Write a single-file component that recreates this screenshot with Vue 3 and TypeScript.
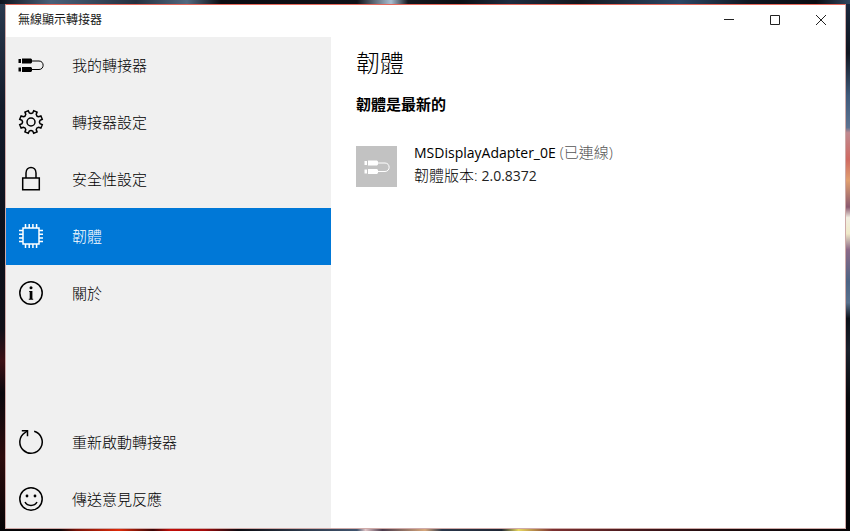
<script setup lang="ts">
import { ref } from 'vue'

type IconName = 'adapter' | 'gear' | 'lock' | 'chip' | 'info' | 'restart' | 'smile'

interface NavItem {
  id: string
  label: string
  icon: IconName
}

const mainItems: NavItem[] = [
  { id: 'adapters', label: '我的轉接器', icon: 'adapter' },
  { id: 'settings', label: '轉接器設定', icon: 'gear' },
  { id: 'security', label: '安全性設定', icon: 'lock' },
  { id: 'firmware', label: '韌體', icon: 'chip' },
  { id: 'about', label: '關於', icon: 'info' },
]

const footerItems: NavItem[] = [
  { id: 'restart', label: '重新啟動轉接器', icon: 'restart' },
  { id: 'feedback', label: '傳送意見反應', icon: 'smile' },
]

const groups = [mainItems, footerItems]
const current = ref('firmware')

const plugs =
  'M.5 7H3V11H.5ZM4 6.500H13L14 7.500V10.500L13 11.500H4ZM.5 15.500H3V19.500H.5ZM4 15H13L14 16V19L13 20H4Z'
const cable = 'M14 9H21C26.500 9 26.500 17.500 21 17.500H14'

// Outline of an eight-toothed gear centred on (13, 13).
function gearPath(): string {
  const point = (radius: number, degrees: number): string => {
    const a = (degrees * Math.PI) / 180
    return `${(13 + radius * Math.cos(a)).toFixed(2)} ${(13 + radius * Math.sin(a)).toFixed(2)}`
  }
  const parts: string[] = []
  for (let i = 0; i < 8; i++) {
    const c = i * 45 + 22.5
    parts.push(`${i === 0 ? 'M' : 'L'}${point(9.2, c - 12)}`)
    parts.push(`L${point(11.6, c - 9)}`)
    parts.push(`L${point(11.6, c + 9)}`)
    parts.push(`L${point(9.2, c + 12)}`)
    parts.push(`A2.800 2.800 0 0 0 ${point(9.2, c + 33)}`)
  }
  return parts.join(' ') + 'Z'
}

const gear = gearPath()
</script>

<template>
  <div class="desktop">
    <div class="window">
      <header class="titlebar">
        <span class="app-title">無線顯示轉接器</span>
        <div class="captions">
          <button type="button" class="caption" aria-label="最小化">
            <svg viewBox="0 0 12 12" class="caption-icon"><path d="M1 5.500H11" /></svg>
          </button>
          <button type="button" class="caption" aria-label="最大化">
            <svg viewBox="0 0 12 12" class="caption-icon"><path d="M1.500 1.500H10.500V10.500H1.500Z" /></svg>
          </button>
          <button type="button" class="caption" aria-label="關閉">
            <svg viewBox="0 0 12 12" class="caption-icon"><path d="M1 1L11 11M11 1L1 11" /></svg>
          </button>
        </div>
      </header>

      <div class="body">
        <nav class="sidebar">
          <div v-for="(group, g) in groups" :key="g" class="group">
            <button
              v-for="item in group"
              :key="item.id"
              type="button"
              class="nav-item"
              :class="{ active: item.id === current }"
              @click="current = item.id"
            >
              <svg viewBox="0 0 26 26" class="nav-icon" aria-hidden="true">
                <g v-if="item.icon === 'adapter'">
                  <path class="solid" :d="plugs" />
                  <path class="thin" :d="cable" />
                </g>
                <g v-else-if="item.icon === 'gear'">
                  <path :d="gear" />
                  <circle cx="13" cy="13" r="4" />
                </g>
                <g v-else-if="item.icon === 'lock'">
                  <path d="M4.700 12H21.300V23.800H4.700Z" />
                  <path d="M8 12V7C8 -.3 18 -.3 18 7V12" />
                </g>
                <g v-else-if="item.icon === 'chip'">
                  <path d="M5 5H21V21H5Z" />
                  <path d="M7.500 1V5M11.200 1V5M14.900 1V5M18.600 1V5M7.500 21V25M11.200 21V25M14.900 21V25M18.600 21V25M1 7.500H5M1 11.200H5M1 14.900H5M1 18.600H5M21 7.500H25M21 11.200H25M21 14.900H25M21 18.600H25" />
                </g>
                <g v-else-if="item.icon === 'info'">
                  <circle cx="13" cy="13" r="11.200" />
                  <circle class="solid" cx="13" cy="7.800" r="1.500" />
                  <path class="solid" d="M11.200 11H14.400V18.700H15.200V19.700H10.800V18.700H11.700V12H11.200Z" />
                </g>
                <g v-else-if="item.icon === 'restart'">
                  <path d="M16.200 2.300A11.200 11.200 0 1 1 7 3.600L9.300 2" />
                  <path d="M3.800 1.700H9.500V7.300" />
                </g>
                <g v-else>
                  <circle cx="13" cy="13" r="11.200" />
                  <circle class="solid" cx="9" cy="10" r="1.400" />
                  <circle class="solid" cx="17" cy="10" r="1.400" />
                  <path d="M7 16C9.500 20.600 16.500 20.600 19 16" />
                </g>
              </svg>
              <span>{{ item.label }}</span>
            </button>
          </div>
        </nav>

        <main class="content">
          <h1>韌體</h1>
          <h2>韌體是最新的</h2>
          <section class="device">
            <div class="tile">
              <svg viewBox="0 0 26 26" class="nav-icon" aria-hidden="true">
                <path class="solid" :d="plugs" />
                <path class="thin" :d="cable" />
              </svg>
            </div>
            <div class="details">
              <p><span class="name">MSDisplayAdapter_0E</span> <span class="status">(已連線)</span></p>
              <p>韌體版本: <span class="number">2.0.8372</span></p>
            </div>
          </section>
        </main>
      </div>
    </div>
  </div>
</template>

<style>
body {
  margin: 0;
}
</style>

<style scoped>
* {
  box-sizing: border-box;
}

.desktop {
  display: flex;
  min-height: 100vh;
  padding: 4px 4px 2px 5px;
  font-family: "Open Sans", "Noto Sans CJK TC", sans-serif;
  font-size: 15px;
  font-weight: 300;
  color: #000;
  background:
    linear-gradient(90deg, #10141f, #4a6079 6%, #24303f 16%, #52687f 22%, #0b0c12 26%, #0f1118 42%, #a9bdd0 46%, #15181f 48%, #0c0e13 54%, #1e2c40 60%, #14181f 68%, #2c4664 80%, #101722 88%, #0a0c12 96%, #31475f) top / 100% 4px no-repeat,
    linear-gradient(90deg, #050407 7%, #7a1207 9%, #e02a08 14%, #3a0506 18%, #c40d08 20%, #a50a0a 24%, #0b0a10 28%, #2c3a4c 36%, #40546e 42%, #e0c4c6 43%, #4a3a4c 45%, #d8a87c 50%, #29364a 52%, #1e2634 59%, #e8d860 61%, #7c3030 65%, #40161a 76%, #1a0a0c 86%, #060406) bottom / 100% 2px no-repeat,
    linear-gradient(180deg, #1c2b40, #10151f 10%, #3f5a7a 18%, #5d7391 24%, #c08a90 25%, #cf6a62 30%, #e0a070 34%, #8a5a70 39%, #f2efe2 41%, #efe9c8 44%, #8c6a88 47%, #4d6484 53%, #58718d 57%, #0c1018 60%, #1a212c 66%, #08080c 75%, #040306) right / 4px 100% no-repeat,
    linear-gradient(180deg, #2b3a4f, #131b2a 20%, #0b101b 45%, #101018 62%, #3c1015 68%, #0a080d 74%, #2c0b0c 86%, #050406);
}

.window {
  display: flex;
  flex: 1;
  flex-direction: column;
  min-width: 0;
  border: 1px solid #cfaaa8;
  border-top-color: #e5695c;
  background: #fff;
}

.titlebar {
  display: flex;
  align-items: stretch;
  justify-content: space-between;
  height: 32px;
  padding: 0 1px 0 12px;
}

.app-title {
  font-size: 12px;
  font-weight: 400;
  line-height: 30px;
  color: #1a1a1a;
}

.captions {
  display: flex;
}

.caption {
  display: flex;
  align-items: center;
  justify-content: center;
  width: 46px;
  height: 30px;
  padding: 0;
  border: 0;
  background: transparent;
  color: #222;
}

.caption:hover {
  background: #e5e5e5;
}

.caption-icon {
  width: 12px;
  height: 12px;
  fill: none;
  stroke: currentColor;
  stroke-width: 1;
}

.body {
  display: flex;
  flex: 1;
}

.sidebar {
  display: flex;
  flex: 0 0 325px;
  flex-direction: column;
  justify-content: space-between;
  background: #f0f0f0;
}

.nav-item {
  display: flex;
  align-items: center;
  gap: 28px;
  width: 100%;
  height: 57px;
  padding: 0 12px 2px;
  border: 0;
  background: transparent;
  color: inherit;
  font: inherit;
  text-align: left;
}

.nav-item.active {
  background: #0078d7;
  color: #fff;
}

.nav-icon {
  flex: none;
  width: 26px;
  height: 26px;
  fill: none;
  stroke: currentColor;
  stroke-width: 1.5;
}

.solid {
  fill: currentColor;
  stroke: none;
}

.thin {
  stroke-width: 1;
}

.content {
  flex: 1;
  min-width: 0;
  padding: 10px 25px;
}

h1,
h2,
p {
  margin: 0;
}

h1 {
  font-size: 24px;
  font-weight: 300;
  line-height: 32px;
}

h2 {
  margin-top: 14px;
  font-size: 15px;
  font-weight: 700;
  line-height: 22px;
}

.device {
  display: flex;
  align-items: flex-end;
  gap: 17px;
  margin-top: 26px;
}

.tile {
  display: flex;
  align-items: center;
  justify-content: center;
  width: 41px;
  height: 41px;
  background: #c2c2c2;
  color: #fff;
}

.details {
  line-height: 22px;
}

.name,
.number {
  font-size: 14px;
  font-weight: 400;
}

.number {
  color: #222;
}

.status {
  color: #555;
}
</style>
